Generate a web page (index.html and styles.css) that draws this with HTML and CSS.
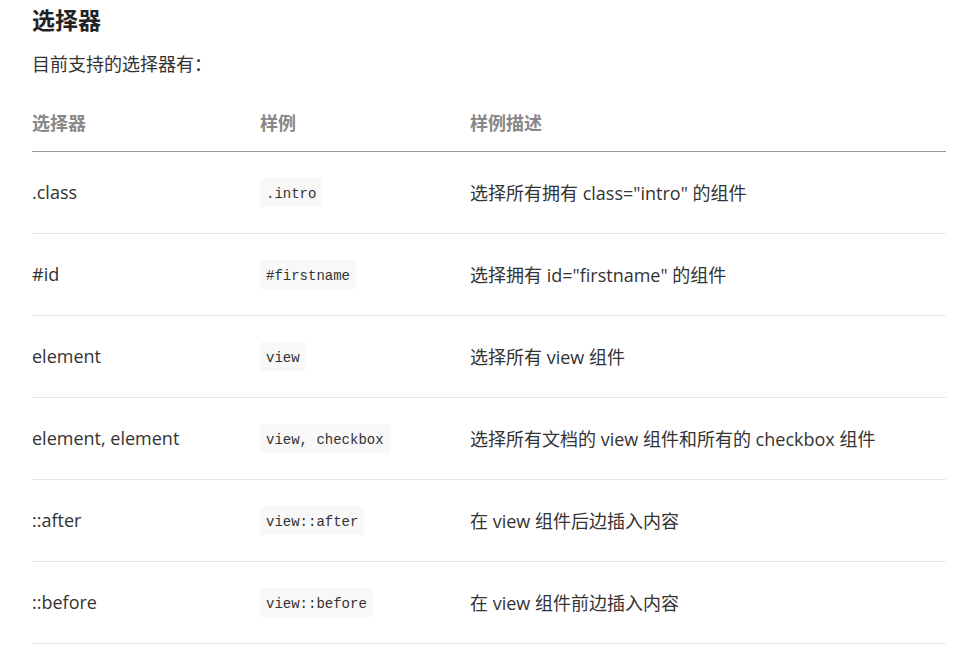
FILE: index.html
```html
<!DOCTYPE html>
<html lang="zh">
<head>
<meta charset="utf-8">
<link rel="stylesheet" href="styles.css">
</head>
<body>
<main class="doc">
  <h2 class="title">选择器</h2>
  <p class="intro-text">目前支持的选择器有：</p>
  <table class="sel-table">
    <thead>
      <tr><th class="c1">选择器</th><th class="c2">样例</th><th class="c3">样例描述</th></tr>
    </thead>
    <tbody>
      <tr><td>.class</td><td><code>.intro</code></td><td>选择所有拥有 class="intro" 的组件</td></tr>
      <tr><td>#id</td><td><code>#firstname</code></td><td>选择拥有 id="firstname" 的组件</td></tr>
      <tr><td>element</td><td><code>view</code></td><td>选择所有 view 组件</td></tr>
      <tr><td>element, element</td><td><code>view, checkbox</code></td><td>选择所有文档的 view 组件和所有的 checkbox 组件</td></tr>
      <tr><td>::after</td><td><code>view::after</code></td><td>在 view 组件后边插入内容</td></tr>
      <tr><td>::before</td><td><code>view::before</code></td><td>在 view 组件前边插入内容</td></tr>
    </tbody>
  </table>
</main>
</body>
</html>
```
FILE: styles.css
```css
html, body {
  margin: 0;
  padding: 0;
  background: #fff;
}
body {
  font-family: "Open Sans", "Noto Sans CJK SC", sans-serif;
  color: #333;
}
.doc {
  padding: 0 13px 0 32px;
}
.title {
  margin: 0;
  padding-top: 5px;
  font-family: "Noto Sans", "Noto Sans CJK SC", sans-serif;
  font-size: 23px;
  line-height: 30px;
  font-weight: 700;
  color: #222;
}
.intro-text {
  margin: 16px 0 0;
  font-size: 18px;
  line-height: 26px;
}
.sel-table {
  width: 100%;
  border-collapse: collapse;
  margin-top: 21px;
  font-size: 18px;
}
.sel-table th {
  text-align: left;
  font-weight: 700;
  color: #888;
  height: 47px;
  padding: 0 0 6px;
  border-bottom: 1px solid #999;
}
.sel-table th.c1 { width: 228px; }
.sel-table th.c2 { width: 210px; }
.sel-table td {
  height: 80px;
  padding: 0 0 1px;
  border-bottom: 1px solid #e6e6e6;
  vertical-align: middle;
}
.sel-table code {
  display: inline-block;
  font-family: "Liberation Mono", "DejaVu Sans Mono", monospace;
  font-size: 14px;
  line-height: 29px;
  padding: 2px 6px 0;
  height: 29px;
  box-sizing: border-box;
  background: #f8f8f8;
  border-radius: 3px;
  color: #333;
  vertical-align: middle;
}
```
